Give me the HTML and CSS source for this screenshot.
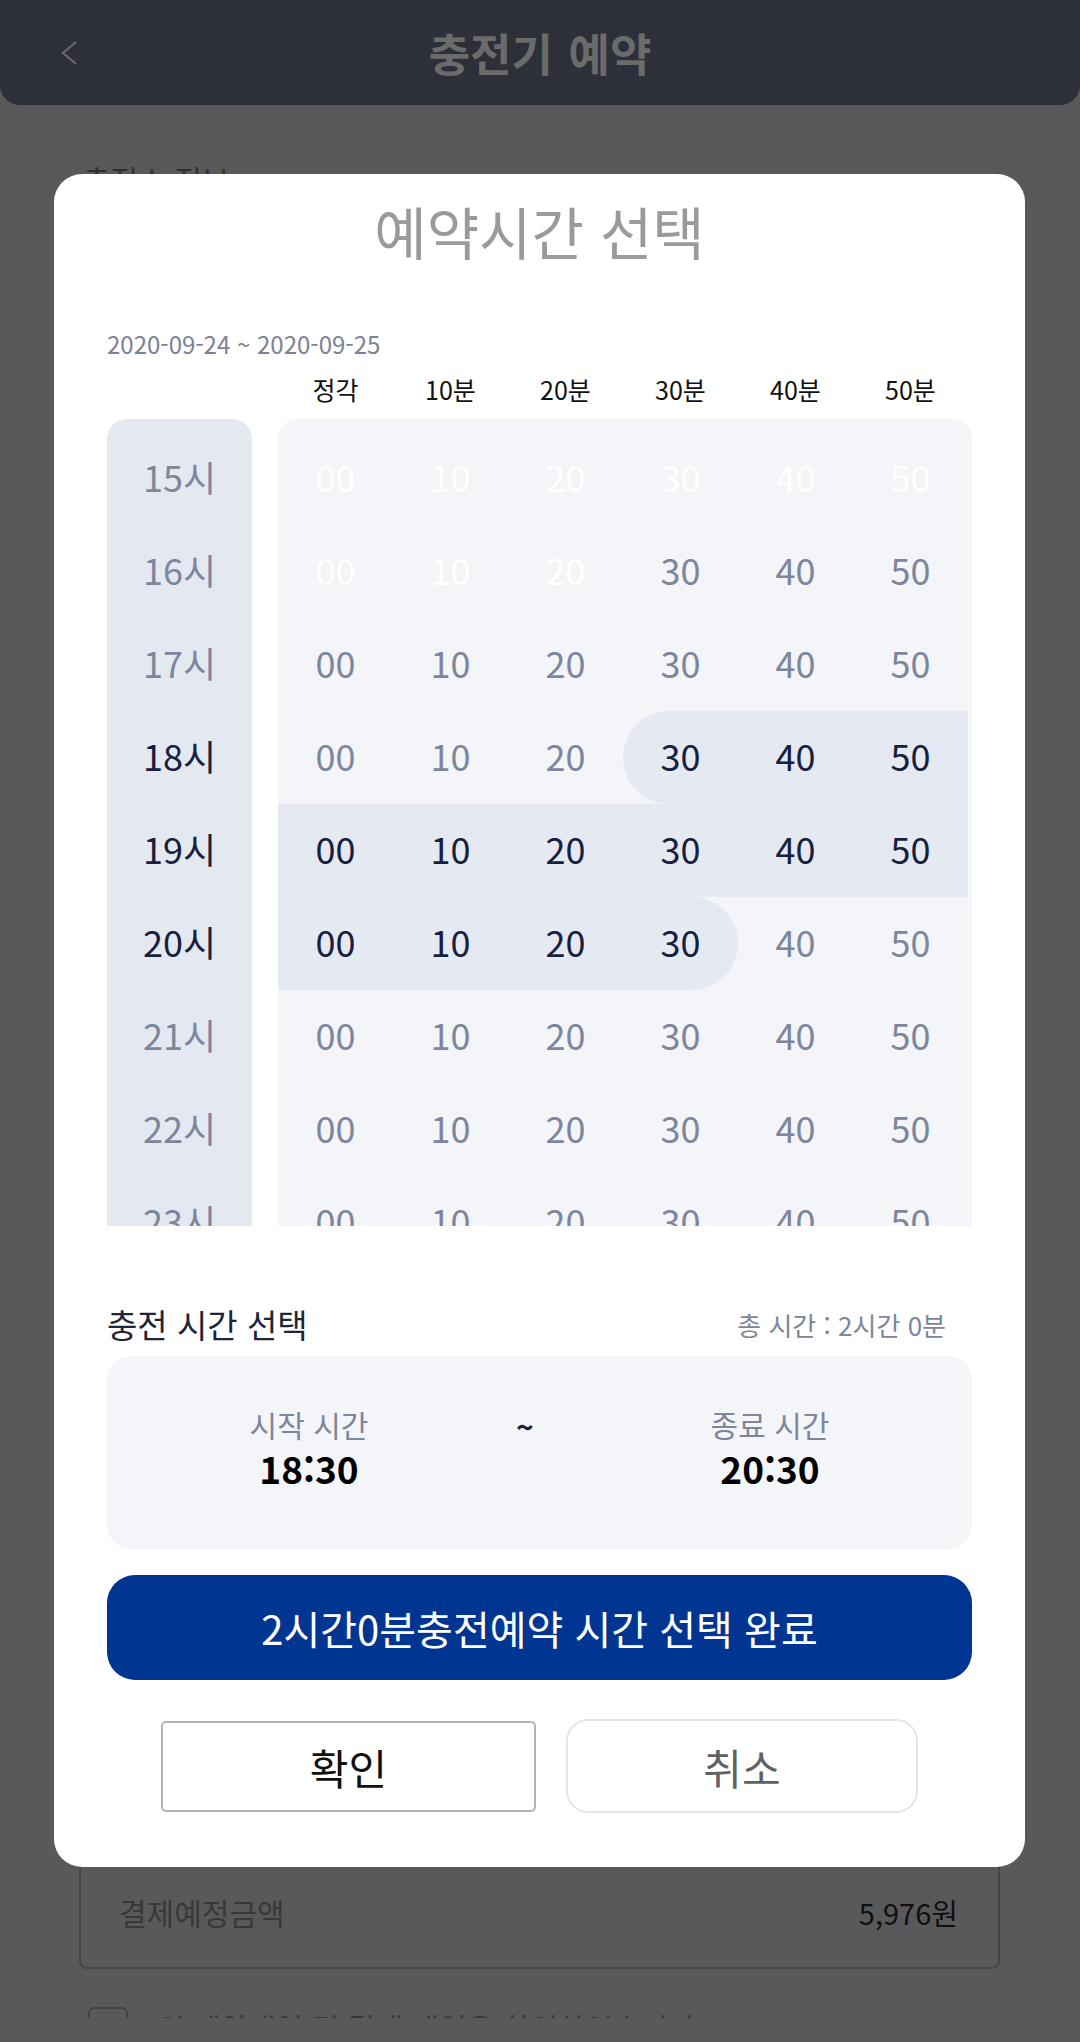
FILE: index.html
```html
<!DOCTYPE html>
<html lang="ko">
<head>
<meta charset="utf-8">
<title>충전기 예약</title>
<link rel="stylesheet" href="styles.css">
</head>
<body>
  <header class="app-header">
    <div class="back">
      <svg viewBox="0 0 16 24" aria-hidden="true"><polyline points="15,1 2,12 15,23" fill="none" stroke="#6b6b6b" stroke-width="2"/></svg>
    </div>
    <h1 class="app-title">충전기 예약</h1>
    <div></div>
  </header>

  <main class="page">
    <h2 class="section-title">충전소 정보</h2>
    <section class="pay-card">
      <div class="pay-row"><span class="pay-label">결제예정금액</span><span class="pay-value">5,976원</span></div>
    </section>
    <label class="agree"><span class="checkbox"></span><span class="agree-text">위 예약내역 및 결제 내역을 확인하였습니다</span></label>
  </main>

  <div class="modal">
    <h2 class="modal-title">예약시간 선택</h2>
    <div class="date-range">2020-09-24 ~ 2020-09-25</div>
    <div class="col-heads"><span>정각</span><span>10분</span><span>20분</span><span>30분</span><span>40분</span><span>50분</span></div>
    <div class="picker">
      <div class="hours">
        <div class="hour">15시</div>
        <div class="hour">16시</div>
        <div class="hour">17시</div>
        <div class="hour on">18시</div>
        <div class="hour on">19시</div>
        <div class="hour on">20시</div>
        <div class="hour">21시</div>
        <div class="hour">22시</div>
        <div class="hour">23시</div>
      </div>
      <div class="mins">
        <div class="min-row"><span class="slot past">00</span><span class="slot past">10</span><span class="slot past">20</span><span class="slot past">30</span><span class="slot past">40</span><span class="slot past">50</span></div>
        <div class="min-row"><span class="slot past">00</span><span class="slot past">10</span><span class="slot past">20</span><span class="slot">30</span><span class="slot">40</span><span class="slot">50</span></div>
        <div class="min-row"><span class="slot">00</span><span class="slot">10</span><span class="slot">20</span><span class="slot">30</span><span class="slot">40</span><span class="slot">50</span></div>
        <div class="min-row"><span class="slot">00</span><span class="slot">10</span><span class="slot">20</span><span class="slot on first">30</span><span class="slot on">40</span><span class="slot on">50</span></div>
        <div class="min-row"><span class="slot on">00</span><span class="slot on">10</span><span class="slot on">20</span><span class="slot on">30</span><span class="slot on">40</span><span class="slot on">50</span></div>
        <div class="min-row"><span class="slot on">00</span><span class="slot on">10</span><span class="slot on">20</span><span class="slot on last">30</span><span class="slot">40</span><span class="slot">50</span></div>
        <div class="min-row"><span class="slot">00</span><span class="slot">10</span><span class="slot">20</span><span class="slot">30</span><span class="slot">40</span><span class="slot">50</span></div>
        <div class="min-row"><span class="slot">00</span><span class="slot">10</span><span class="slot">20</span><span class="slot">30</span><span class="slot">40</span><span class="slot">50</span></div>
        <div class="min-row"><span class="slot">00</span><span class="slot">10</span><span class="slot">20</span><span class="slot">30</span><span class="slot">40</span><span class="slot">50</span></div>
      </div>
    </div>

    <div class="summary">
      <h3 class="summary-title">충전 시간 선택</h3>
      <span class="total">총 시간 : 2시간 0분</span>
    </div>

    <div class="timebox">
      <div class="tcol"><div class="tlabel">시작 시간</div><div class="tvalue">18:30</div></div>
      <div class="tilde">~</div>
      <div class="tcol"><div class="tlabel">종료 시간</div><div class="tvalue">20:30</div></div>
    </div>

    <button class="confirm-bar">2시간0분충전예약 시간 선택 완료</button>

    <div class="actions">
      <button class="btn btn-ok">확인</button>
      <button class="btn btn-cancel">취소</button>
    </div>
  </div>
</body>
</html>
```
FILE: styles.css
```css
* { box-sizing: border-box; margin: 0; padding: 0; }
html, body { width: 1080px; height: 2042px; }
body {
  font-family: "Noto Sans CJK KR", "Noto Sans", sans-serif;
  background: #59595b;
  overflow: hidden;
  position: relative;
}

/* header (dimmed) */
.app-header {
  height: 105px;
  background: #2d3039;
  border-radius: 0 0 20px 20px;
  display: grid;
  grid-template-columns: 1fr auto 1fr;
  align-items: center;
}
.back { padding-left: 61px; display: flex; align-items: center; }
.back svg { width: 16px; height: 24px; display: block; }
.app-title {
  font-size: 45px;
  font-weight: 700;
  color: #6b6b6b;
  word-spacing: 3px;
  line-height: 54px;
}

/* page behind the modal (dimmed) */
.page {
  height: 1913px;
  overflow: hidden;
  padding: 54px 80px 0 79px;
}
.section-title {
  font-size: 30px;
  font-weight: 400;
  line-height: 40px;
  color: #303030;
  padding-left: 4px;
}
.pay-card {
  margin-top: 1601px;
  height: 169px;
  border: 2px solid #474747;
  border-radius: 8px;
  padding: 90px 40px 0 38px;
}
.pay-row {
  display: flex;
  justify-content: space-between;
  align-items: center;
  height: 40px;
}
.pay-label { color: #383838; font-size: 30px; }
.pay-value { color: #0f0f0f; font-size: 29px; }
.agree {
  margin-top: 38px;
  display: flex;
  align-items: center;
  gap: 29px;
  padding-left: 9px;
}
.checkbox {
  width: 40px;
  height: 40px;
  border: 2px solid #444;
  border-radius: 6px;
}
.agree-text { font-size: 30px; line-height: 40px; color: #383838; }

/* modal */
.modal {
  position: absolute;
  left: 54px;
  top: 174px;
  width: 971px;
  background: #fff;
  border-radius: 28px;
  padding: 16px 53px 54px 53px;
}
.modal-title {
  height: 80px;
  line-height: 80px;
  text-align: center;
  font-size: 57px;
  font-weight: 400;
  color: #9a9a9a;
}
.date-range {
  margin-top: 57px;
  font-size: 24px;
  line-height: 34px;
  color: #7b8196;
}
.col-heads {
  margin-top: 8px;
  display: flex;
  height: 40px;
  padding-left: 171px;
}
.col-heads span {
  width: 115px;
  text-align: center;
  font-size: 25px;
  line-height: 40px;
  color: #111;
}
.picker {
  margin-top: 10px;
  height: 807px;
  overflow: hidden;
  display: flex;
  gap: 26px;
  align-items: flex-start;
}
.hours {
  width: 145px;
  flex: none;
  background: #e4e8f1;
  border-radius: 20px 20px 0 0;
  padding-top: 13px;
}
.mins {
  width: 694px;
  flex: none;
  background: #f3f5f9;
  border-radius: 20px 20px 0 0;
  padding: 13px 4px 0 0;
}
.min-row { display: flex; }
.hour, .slot {
  height: 93px;
  display: flex;
  align-items: center;
  justify-content: center;
  font-size: 36px;
  padding-bottom: 5px;
  color: #7e869b;
}
.slot { width: 115px; }
.past { color: #fff; }
.on { color: #17203d; }
.slot.on { background: #e4e9f2; }
.slot.first { border-radius: 46.5px 0 0 46.5px; }
.slot.last { border-radius: 0 46.5px 46.5px 0; }

.summary {
  margin-top: 73px;
  height: 50px;
  display: flex;
  justify-content: space-between;
  align-items: center;
  padding-right: 26px;
}
.summary-title {
  font-size: 33px;
  font-weight: 400;
  line-height: 50px;
  color: #1e2538;
}
.total { font-size: 26px; color: #7e869b; }

.timebox {
  margin-top: 7px;
  height: 193px;
  background: #f3f5f9;
  border-radius: 24px;
  display: grid;
  grid-template-columns: 404px 57px 404px;
  align-items: start;
  padding-top: 46px;
}
.tcol { text-align: center; }
.tlabel { font-size: 30px; line-height: 44px; color: #7e869b; }
.tvalue { font-size: 37px; line-height: 44px; font-weight: 700; color: #000; }
.tilde {
  font-size: 30px;
  line-height: 48px;
  font-weight: 700;
  color: #1e2538;
  padding-left: 5px;
}

.confirm-bar {
  margin-top: 26px;
  height: 105px;
  width: 100%;
  border: 0;
  border-radius: 28px;
  background: #003692;
  color: #fff;
  font-family: inherit;
  font-size: 40px;
  display: flex;
  align-items: center;
  justify-content: center;
}

.actions {
  margin-top: 39px;
  height: 94px;
  display: flex;
  justify-content: center;
  align-items: center;
  gap: 30px;
}
.btn {
  font-family: inherit;
  font-size: 42px;
  background: #fff;
  padding: 0;
}
.btn-ok {
  width: 375px;
  height: 91px;
  border: 2px solid #b3b3b3;
  border-radius: 5px;
  color: #111;
}
.btn-cancel {
  width: 352px;
  height: 94px;
  border: 2px solid #e5e5e5;
  border-radius: 22px;
  color: #616161;
}
```
